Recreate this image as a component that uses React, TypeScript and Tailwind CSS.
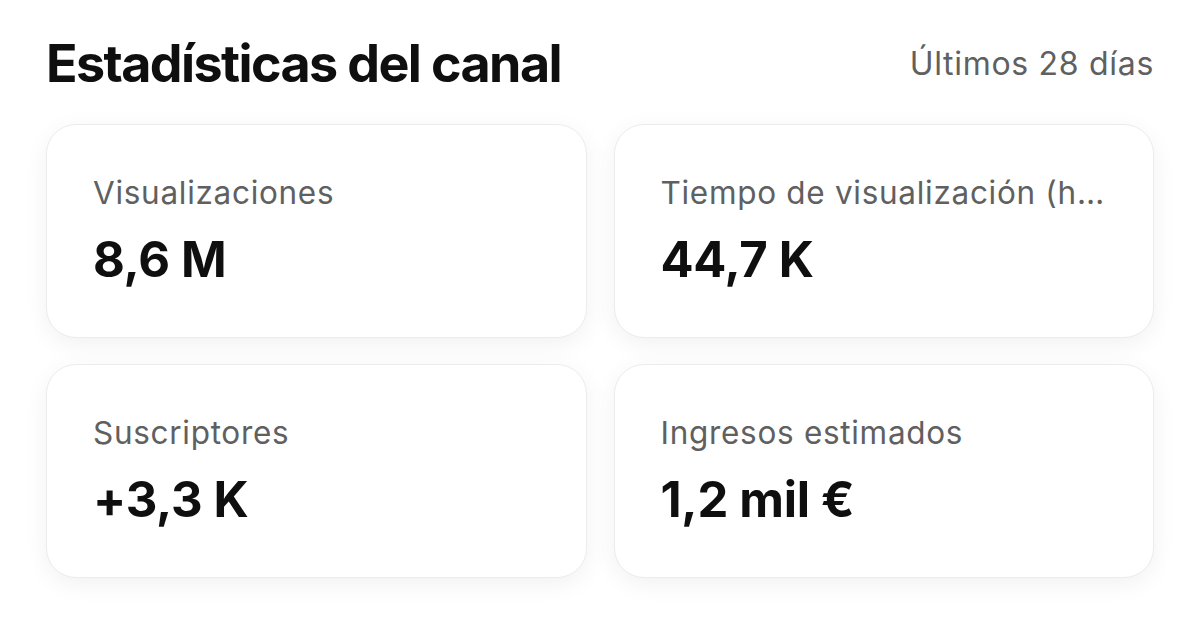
const stats = [
  { label: "Visualizaciones", value: "8,6 M" },
  { label: "Tiempo de visualización (horas)", value: "44,7 K" },
  { label: "Suscriptores", value: "+3,3 K" },
  { label: "Ingresos estimados", value: "1,2 mil €" },
];

function StatCard({ label, value }: { label: string; value: string }) {
  return (
    <div className="flex h-[214px] flex-col rounded-[30px] border border-[#ececec] bg-white px-[46px] pt-[48px] shadow-[0_6px_24px_rgba(0,0,0,0.06)]">
      <p className="truncate text-[31.5px] leading-[40px] tracking-[0.7px] text-[#606060]">{label}</p>
      <p className="mt-[20px] text-[49px] font-bold leading-[54px] tracking-[-0.3px] text-[#0f0f0f]">{value}</p>
    </div>
  );
}

export default function App() {
  return (
    <div className="min-h-[619px] bg-white px-[46px] pt-[32px] font-['Inter',sans-serif]">
      <div className="flex h-[64px] items-center justify-between">
        <h1 className="text-[52px] font-bold leading-[64px] tracking-[-1.6px] text-[#0f0f0f]">Estadísticas del canal</h1>
        <span className="text-[32px] leading-[40px] tracking-[0.7px] text-[#606060]">Últimos 28 días</span>
      </div>
      <div className="mt-[28px] grid grid-cols-2 gap-x-[27px] gap-y-[26px]">
        {stats.map((s) => (
          <StatCard key={s.label} label={s.label} value={s.value} />
        ))}
      </div>
    </div>
  );
}
